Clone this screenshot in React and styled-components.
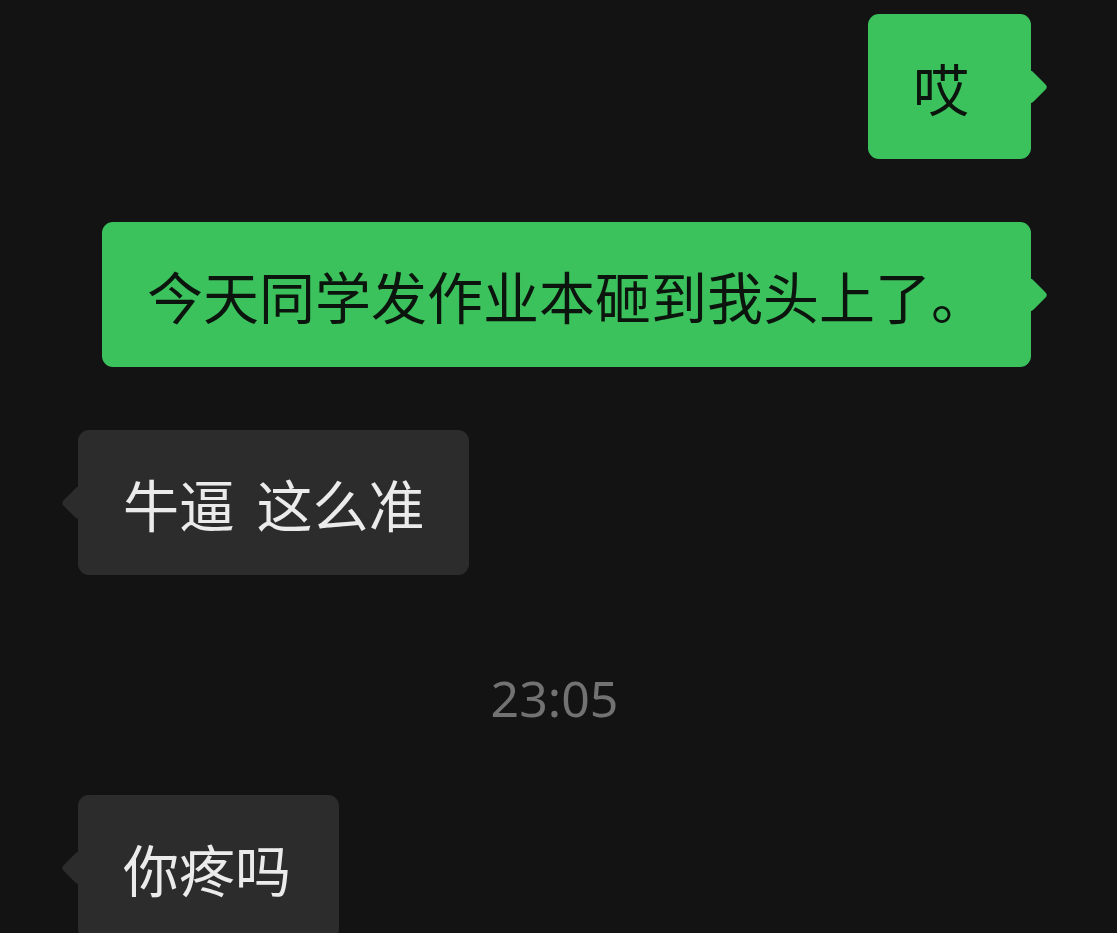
import React from "react";
import styled, { createGlobalStyle, css } from "styled-components";

const GlobalStyle = createGlobalStyle`
  html, body {
    margin: 0;
    padding: 0;
    background: #131313;
  }
  body {
    font-family: "Noto Sans CJK SC", "Noto Sans", sans-serif;
    overflow: hidden;
  }
`;

const Screen = styled.div`
  width: 1117px;
  height: 933px;
  overflow: hidden;
  background: #131313;
  display: flex;
  flex-direction: column;
  gap: 63px;
  padding: 14px 86px 0 78px;
  box-sizing: border-box;
`;

const Row = styled.div`
  display: flex;
  justify-content: ${(p) => (p.$mine ? "flex-end" : "flex-start")};
`;

const Bubble = styled.div`
  position: relative;
  box-sizing: border-box;
  height: 145px;
  flex: none;
  display: flex;
  align-items: center;
  padding: 0 44px 0 45px;
  border-radius: 11px;
  font-size: 56px;
  line-height: 1;
  white-space: nowrap;
  word-spacing: 9px;
  background: ${(p) => (p.$mine ? "#3cc25d" : "#2c2c2c")};
  color: ${(p) => (p.$mine ? "#0b150d" : "#ebebeb")};
  min-width: ${(p) => p.$minWidth || 0}px;

  /* little pointer on the side of the bubble */
  &::after {
    content: "";
    position: absolute;
    top: 50%;
    width: 25px;
    height: 25px;
    background: inherit;
    border-radius: 4px;
    transform: translateY(-50%) rotate(45deg);
    ${(p) =>
      p.$mine
        ? css`
            right: -12px;
          `
        : css`
            left: -12px;
          `}
  }
`;

const Stamp = styled.div`
  align-self: center;
  margin: 32px 0 6px 0;
  font-family: "Noto Sans", "Liberation Sans", sans-serif;
  font-size: 50px;
  line-height: 56px;
  color: #727272;
`;

const messages = [
  { mine: true, text: "哎", minWidth: 163 },
  { mine: true, text: "今天同学发作业本砸到我头上了。" },
  { mine: false, text: "牛逼 这么准" },
  { stamp: "23:05" },
  { mine: false, text: "你疼吗", minWidth: 261 },
];

export default function App() {
  return (
    <>
      <GlobalStyle />
      <Screen>
        {messages.map((m, i) =>
          m.stamp ? (
            <Stamp key={i}>{m.stamp}</Stamp>
          ) : (
            <Row key={i} $mine={m.mine}>
              <Bubble $mine={m.mine} $minWidth={m.minWidth}>
                {m.text}
              </Bubble>
            </Row>
          )
        )}
      </Screen>
    </>
  );
}
